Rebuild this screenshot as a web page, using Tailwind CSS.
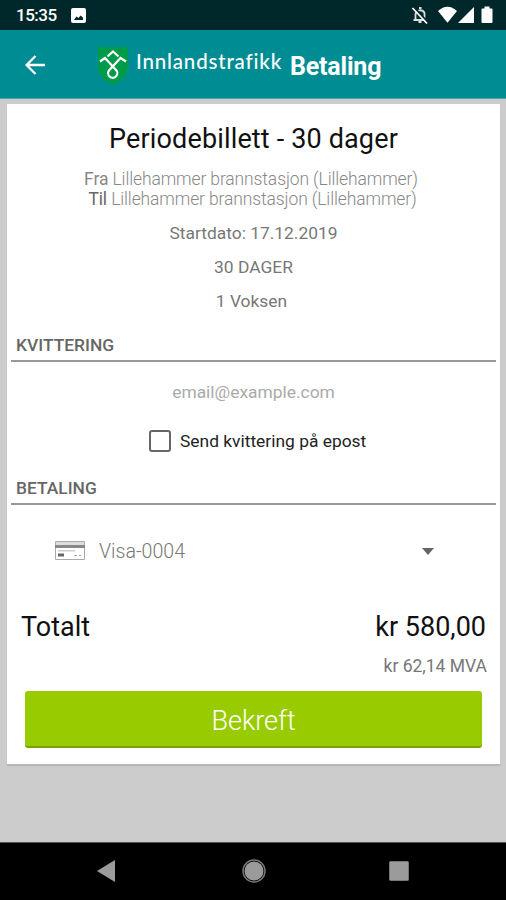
<!DOCTYPE html>
<html lang="no">
<head>
<meta charset="utf-8">
<title>Betaling</title>
<script src="https://cdn.jsdelivr.net/npm/@tailwindcss/browser@4"></script>
</head>
<body class="w-[506px] h-[900px] overflow-hidden flex flex-col bg-[#cccccc] font-['Roboto',sans-serif]">
<div class="h-[30px] shrink-0 bg-[#00282b] flex items-center pl-4 pr-3 text-white">
  <span class="mt-px text-[17px] font-medium leading-none tracking-[-0.5px]">15:35</span>
  <svg class="ml-[14px]" width="15" height="15" viewBox="0 0 15 15"><path fill="#fff" fill-rule="evenodd" d="M2 0h11a2 2 0 0 1 2 2v11a2 2 0 0 1-2 2H2a2 2 0 0 1-2-2V2a2 2 0 0 1 2-2zM3 12h9V9.500L9.500 7.500 7.500 10 5.500 8.500z"/></svg>
  <svg class="ml-auto" width="83" height="20" viewBox="411 5 83 20">
    <path d="M415.500 20V14a4.800 4.800 0 0 1 9-1V20M413.500 20h12" fill="none" stroke="#ddd" stroke-width="1.800"/>
    <path d="M419 8h2.500M418.500 22h3" stroke="#ddd" stroke-width="2"/>
    <path d="M414.500 8l14 15" stroke="#00282b" stroke-width="2"/>
    <path d="M412.500 8l14.500 15.500" stroke="#fff" stroke-width="1.800"/>
    <path d="M438 11q9.500-8.500 19 0L447.500 22.800z" fill="#fff"/>
    <path d="M474 7v16h-16z" fill="#fff"/>
    <path d="M482.500 8.500h2V6.500h5v2h2q1 0 1 1V22q0 1-1 1h-9q-1 0-1-1V9.500q0-1 1-1z" fill="#fff"/>
  </svg>
</div>
<header class="h-[69px] shrink-0 bg-[#008c93] border-b border-[#4ba6aa] flex items-center text-white">
  <svg class="ml-[25px] mt-px" width="20" height="20" viewBox="0 0 20 20" fill="none" stroke="#fff" stroke-width="2.300"><path d="M20 10H2M10.500 1L1.600 10l8.900 9"/></svg>
  <svg class="ml-[53px] mt-[3px]" width="30" height="38" viewBox="0 0 30 38"><path fill="#009b48" d="M0 0h30v20c0 9-7 14-15 18C7 34 0 29 0 20z"/><path fill="none" stroke="#fff" stroke-width="2.200" d="M9.500 9.500L15 4.500l5.500 5M2 14.500L7 11l10.500 11.500a4.600 4.600 0 1 1-6.500 1L22.500 11l5.500 3.500"/></svg>
  <span class="ml-[8px] mt-[-5px] w-[146px] whitespace-nowrap text-[20.500px] leading-none font-medium tracking-[0.82px] font-['Lato',sans-serif]">Innlandstrafikk</span>
  <h1 class="ml-[8px] mt-[4px] whitespace-nowrap text-[25px] leading-none font-bold tracking-[-0.2px]">Betaling</h1>
</header>
<main class="h-[743px] shrink-0 pt-[5px] px-[6px]">
  <section class="ml-px w-[493px] h-[660px] bg-white shadow-[0_2px_1px_#b8b8b8] flex flex-col text-[#777]">
    <h2 class="mt-[20px] h-[30px] leading-[30px] text-center text-[27px] tracking-[0.15px] text-[#111] whitespace-nowrap">Periodebillett - 30 dager</h2>
    <div class="mt-[15px] pr-[5px] text-center text-[17.500px] tracking-[-0.12px] leading-[20px] font-light text-[#888]">
      <p><span class="font-normal">Fra</span> Lillehammer brannstasjon (Lillehammer)</p>
      <p class="pl-[3px]"><span class="font-normal text-[#666]">Til</span> Lillehammer brannstasjon (Lillehammer)</p>
    </div>
    <div class="mt-[7px] text-center text-[17.400px] leading-[34px]">
      <p>Startdato: 17.12.2019</p>
      <p>30 DAGER</p>
      <p class="pr-[4px]">1 Voksen</p>
    </div>
    <h3 class="mt-[11px] mx-1 h-[33px] pl-[5px] border-b-2 border-[#999] text-[17.400px] leading-[32px] font-medium text-[#666]">KVITTERING</h3>
    <p class="mt-[18px] text-center text-[17.400px] leading-[24px] text-[#aaa]">email@example.com</p>
    <label class="mt-[25px] ml-[142px] flex items-center gap-[9px] text-[17.400px] leading-[24px] text-[#222]"><span class="size-[22px] border-2 border-[#666] rounded-[3px]"></span>Send kvittering på epost</label>
    <h3 class="mt-[19px] mx-1 h-[33px] pl-[5px] border-b-2 border-[#999] text-[17.400px] leading-[32px] font-medium text-[#666]">BETALING</h3>
    <div class="mt-[32px] pl-[48px] pr-[66px] h-[30px] flex items-center">
      <svg class="mt-[-3px]" width="30" height="19" viewBox="0 0 30 19"><path fill="#fff" stroke="#aaa" d="M.5.500h29v18H.500z"/><path fill="#888" d="M0 4h30v3H0z"/><path fill="#ddd" d="M1 1h28v3H1z"/><path fill="#ccc" d="M3 9h17v1.500H3z"/><path fill="#666" d="M3 12.500h6V15.500H3z"/><path fill="#aaa" d="M19 14h3v1h-3zM24 14h2v1h-2z"/></svg>
      <span class="ml-[14px] text-[19.600px] leading-none font-light text-[#777]">Visa-0004</span>
      <svg class="ml-auto mt-[-2px]" width="12" height="7" viewBox="0 0 12 7"><path fill="#666" d="M0 0h12L6 7z"/></svg>
    </div>
    <div class="mt-[44px] ml-[14px] mr-[14px] h-[32px] flex justify-between items-center text-[27px] leading-none text-[#111]"><span>Totalt</span><span>kr 580,00</span></div>
    <p class="mt-[11px] mr-[13px] text-right text-[17.500px] leading-[24px]">kr 62,14 MVA</p>
    <button class="mt-[13px] ml-[18px] w-[457px] h-[57px] pt-[6px] shrink-0 rounded-[3px] bg-[#99cc00] border-b-2 border-[#79a30c] text-white text-[27px] leading-none font-light">Bekreft</button>
  </section>
</main>
<nav class="h-[58px] pb-[2px] shrink-0 bg-black border-t border-[#555] flex items-center">
  <svg class="ml-[97px]" width="18" height="22" viewBox="0 0 18 22"><path fill="#9b9b9b" d="M18 0v22L0 11z"/></svg>
  <svg class="ml-[127px]" width="24" height="24" viewBox="0 0 24 24"><circle cx="12" cy="12" r="11" fill="none" stroke="#777" stroke-width="1.500"/><circle cx="12" cy="12" r="9.500" fill="#9b9b9b"/></svg>
  <svg class="ml-[123px]" width="20" height="20" viewBox="0 0 20 20"><rect x=".5" y=".5" width="19" height="19" rx="1" fill="#9b9b9b" stroke="#777"/></svg>
</nav>
</body>
</html>
